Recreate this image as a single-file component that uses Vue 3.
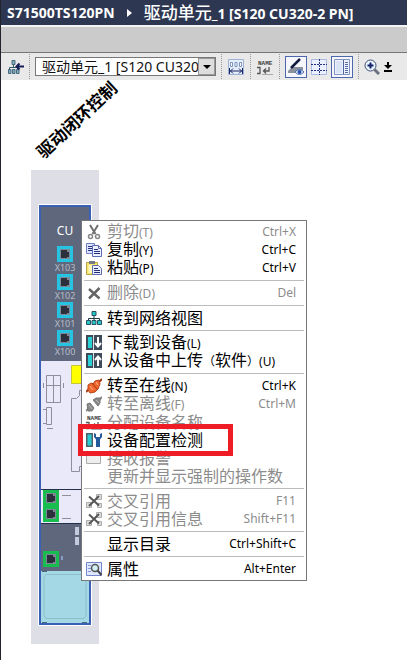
<script setup>
import { ref } from 'vue'

const device = ref('cu320')
const ports = ['X103', 'X102', 'X101', 'X100']

const groups = [
  [
    { icon: 'cut', text: '剪切', key: '(T)', shortcut: 'Ctrl+X', off: true },
    { icon: 'copy', text: '复制', key: '(Y)', shortcut: 'Ctrl+C' },
    { icon: 'paste', text: '粘贴', key: '(P)', shortcut: 'Ctrl+V' }
  ],
  [{ icon: 'delete', text: '删除', key: '(D)', shortcut: 'Del', off: true }],
  [{ icon: 'network', text: '转到网络视图' }],
  [
    { icon: 'download', text: '下载到设备', key: '(L)' },
    { icon: 'upload', text: '从设备中上传', note: '软件', key: '(U)' }
  ],
  [
    { icon: 'online', text: '转至在线', key: '(N)', shortcut: 'Ctrl+K' },
    { icon: 'offline', text: '转至离线', key: '(F)', shortcut: 'Ctrl+M', off: true },
    { icon: 'name', text: '分配设备名称', off: true },
    { icon: 'detect', text: '设备配置检测', marked: true },
    { icon: 'box', text: '接收报警', off: true },
    { text: '更新并显示强制的操作数', off: true }
  ],
  [
    { icon: 'cross', text: '交叉引用', shortcut: 'F11', off: true },
    { icon: 'cross', text: '交叉引用信息', shortcut: 'Shift+F11', off: true }
  ],
  [{ text: '显示目录', shortcut: 'Ctrl+Shift+C' }],
  [{ icon: 'props', text: '属性', shortcut: 'Alt+Enter' }]
]
</script>

<template>
  <div class="page">
    <svg class="defs" aria-hidden="true">
      <symbol id="i-cut" viewBox="0 0 16 16">
        <path d="M4 1l5.500 9M12 1L6.500 10" fill="none" stroke="#6f6f6f" stroke-width="2" />
        <circle cx="4.500" cy="12.500" r="2" fill="none" stroke="#858585" stroke-width="1.500" />
        <circle cx="11.500" cy="12.500" r="2" fill="none" stroke="#858585" stroke-width="1.500" />
      </symbol>
      <symbol id="i-copy" viewBox="0 0 16 16">
        <path d="M.5 1.500h8v10h-8z" fill="#dfe4ff" stroke="#6f7fc4" />
        <path d="M2 4.500h4M2 6.500h4M2 8.500h4" stroke="#26357e" />
        <path d="M6.500 3.500h6l3 3v8h-9z" fill="#eef1ff" stroke="#5c6bb5" />
        <path d="M12.500 3.500v3h3" fill="none" stroke="#5c6bb5" />
        <path d="M8 7.500h4M8 9.500h6M8 11.500h6" stroke="#202d78" />
      </symbol>
      <symbol id="i-paste" viewBox="0 0 16 16">
        <path d="M.5 2.500h11v12H.5z" fill="#f4e36c" stroke="#b7a548" />
        <path d="M3 1h6v3H3z" fill="#777a84" />
        <path d="M2.500 5h7v8h-7z" fill="#fff8be" />
        <path d="M6.500 5.500h6l3 3v6h-9z" fill="#edf0ff" stroke="#5c6bb5" />
        <path d="M8 8.500h4M8 10.500h6M8 12.500h6" stroke="#202d78" />
      </symbol>
      <symbol id="i-delete" viewBox="0 0 16 16">
        <path d="M3 4l10.500 9.500M13.500 3L3 13.500" fill="none" stroke="#666" stroke-width="2.500" />
      </symbol>
      <symbol id="i-network" viewBox="0 0 16 16">
        <path d="M8 6v4M2.500 11V8.500h11V11" fill="none" stroke="#1d3743" />
        <path d="M6 1.500h4v4H6zM.5 10.500h4v4h-4zM6 10.500h4v4H6zM11.500 10.500h4v4h-4z" fill="#25c8c6" stroke="#29515f" />
      </symbol>
      <symbol id="i-download" viewBox="0 0 16 16">
        <path d="M0 0h16v15H0z" fill="#3f4a5b" />
        <path d="M2 2h4v11H2z" fill="#29d0d4" />
        <path d="M7 0h1v15H7z" fill="#dce4e8" />
        <path d="M12 2v8M9 8l3 3.500L15 8" fill="none" stroke="#fff" stroke-width="2" />
      </symbol>
      <symbol id="i-upload" viewBox="0 0 16 16">
        <path d="M0 0h16v15H0z" fill="#3f4a5b" />
        <path d="M2 2h4v11H2z" fill="#29d0d4" />
        <path d="M7 0h1v15H7z" fill="#dce4e8" />
        <path d="M12 13V5M9 7l3-3.500L15 7" fill="none" stroke="#fff" stroke-width="2" />
      </symbol>
      <symbol id="i-online" viewBox="0 0 16 16">
        <path d="M0 14l3-3M13 4l3-3" stroke="#a33b16" stroke-width="2" />
        <path d="M2 7l3-2 2 1 2-3 4-1 1 4-2 5-3 3-5 1-2-3z" fill="#f1662c" stroke="#b54419" />
        <path d="M4 8l3 4M10 4l2 3" stroke="#ffb58c" />
        <path d="M6 5l5 6" stroke="#9d3415" />
      </symbol>
      <symbol id="i-offline" viewBox="0 0 16 16">
        <path d="M0 15l3-3M13 4l3-3" stroke="#888" stroke-width="2" />
        <path d="M1 8l3-1 4 5-2 3H2zM7 4l3-2h4v5l-2 3z" fill="#858885" stroke="#777" />
        <path d="M3 9l3 4M10 4l3 3" stroke="#b8bab8" />
      </symbol>
      <symbol id="i-name" viewBox="0 0 16 16">
        <path d="M0 8.500h3v6H0M12 8v4H7M9 9.500L6.500 12 9 14.500" fill="none" stroke="#555" stroke-width="1.300" />
        <path d="M5 15.500h11" stroke="#aaa" />
      </symbol>
      <symbol id="i-detect" viewBox="0 0 16 16">
        <path d="M0 1h7v14H0z" fill="#50636d" />
        <path d="M1.500 2.500h4v11h-4z" fill="#29cbd0" />
        <path d="M8 1v4l2 2.500V15h4V7.500L16 5V1l-2 1v3h-4V2z" fill="#245a9c" />
      </symbol>
      <symbol id="i-box" viewBox="0 0 16 16">
        <path d="M.5 2.500h14v11H.5z" fill="#eee" stroke="#aaa" />
      </symbol>
      <symbol id="i-cross" viewBox="0 0 16 16">
        <path d="M10.500 1.500h5v5h-5zM.5 9.500h5v5h-5zM11.500 10.500h4v4h-4z" fill="#ddd" stroke="#aaa" />
        <path d="M3 3.500l10 9M13 3L3 13" stroke="#565656" stroke-width="2" />
      </symbol>
      <symbol id="i-props" viewBox="0 0 16 16">
        <path d="M.5 1.500h15v13H.5z" fill="#dfe7ff" stroke="#7484ce" />
        <path d="M2 4.500h3M2 7.500h3M2 10.500h3" stroke="#8896dc" />
        <circle cx="9" cy="7" r="3.500" fill="#d3f0f7" stroke="#555" stroke-width="1.500" />
        <path d="M11.500 9.500l4 4.500" stroke="#444" stroke-width="2" />
      </symbol>
      <symbol id="i-port" viewBox="0 0 16 16">
        <path d="M1.500 1.500h13v13h-13z" fill="#7e8794" stroke="currentColor" stroke-width="3" />
        <path d="M4 4h6v2h2v5h-2v1H4z" fill="#2c303c" />
      </symbol>
      <symbol id="i-tree" viewBox="0 0 16 16">
        <path d="M5.500 5v4M1.500 10V8.500h8V10" fill="none" stroke="#36586b" />
        <path d="M4 1.500h3v4H4zM.5 10.500H3v4H.5zM4.500 10.500H7v4H4.500zM8.500 10.500H11v4H8.500z" fill="#7facc0" stroke="#48687b" />
        <path d="M16 7.500H9M11.500 4.500l-3 3 3 3" fill="none" stroke="#141d55" stroke-width="2" />
      </symbol>
      <symbol id="i-fit" viewBox="0 0 16 16">
        <path d="M.5.5h15v15H.5z" fill="#e4edfa" stroke="#9eb2d5" />
        <path d="M2.500 3.500h2v4h-2zM7 3.500h2v4H7zM11.500 3.500h2v4h-2z" fill="#fff" stroke="#7e93ba" />
        <path d="M1.500 9v6M14.500 9v6" stroke="#182469" />
        <path d="M2 12h12M5 9.500L2.500 12 5 14.500M11 9.500l2.500 2.500-2.500 2.500" fill="none" stroke="#182469" />
      </symbol>
      <symbol id="i-grid" viewBox="0 0 16 16">
        <path d="M.5.5h15v15H.5z" fill="#eaf0ff" stroke="#aab8e2" />
        <path d="M0 5.500h16M0 11.500h16M8.500 0v16" fill="none" stroke="#25317c" stroke-dasharray="2 1" />
      </symbol>
      <symbol id="i-pen" viewBox="0 0 18 18">
        <path d="M1 13l4-4h11v3l-4 3H1z" fill="#8c929b" />
        <path d="M4 10L13 1" stroke="#111b3d" stroke-width="2.500" />
        <path d="M8 14q4.500-5 9 0-4.500 5-9 0z" fill="#eef4ff" stroke="#4d6baf" />
        <circle cx="12.500" cy="14" r="2" fill="#244caa" />
      </symbol>
      <symbol id="i-list" viewBox="0 0 18 18">
        <path d="M1.500 1.500h15v15h-15z" fill="#eef2ff" stroke="#8193c3" />
        <path d="M10.500 2v14" stroke="#4f639e" />
        <path d="M12 4.500h3M12 6.500h3M12 8.500h3M12 10.500h3M12 12.500h3M12 14.500h3" stroke="#53699f" />
        <path d="M3 3h6v12H3z" fill="#dbe3f6" />
      </symbol>
      <symbol id="i-zoom" viewBox="0 0 16 16">
        <circle cx="6.500" cy="6.500" r="5.500" fill="#e7f6ff" stroke="#414b70" />
        <path d="M3.500 6.500h6M6.500 3.500v6" stroke="#15206b" stroke-width="2" />
        <path d="M10.500 10.500l4.500 4.500" stroke="#697080" stroke-width="3" />
      </symbol>
    </svg>

    <header class="title">
      <span class="latin">S71500TS120PN</span>
      <svg class="crumb" viewBox="0 0 5 8" aria-hidden="true"><path d="M0 0l5 4-5 4z" fill="#fff" /></svg>
      <span>驱动单元<span class="latin">_1 [S120 CU320-2 PN]</span></span>
    </header>
    <div class="band"></div>

    <div class="toolbar" role="toolbar">
      <button class="tool slim" aria-label="网络"><svg><use href="#i-tree" /></svg></button>
      <i class="sep"></i>
      <div class="picker">
        <select v-model="device" aria-label="设备">
          <option value="cu320">驱动单元_1 [S120 CU320-2 PN]</option>
        </select>
        <span class="drop"><svg viewBox="0 0 8 4"><path d="M0 0h8L4 4z" /></svg></span>
      </div>
      <i class="sep"></i>
      <button class="tool" aria-label="宽度"><svg><use href="#i-fit" /></svg></button>
      <i class="sep"></i>
      <button class="tool" aria-label="名称"><svg><use href="#i-name" /><text x="1" y="6" class="tiny">NAME</text></svg></button>
      <i class="sep"></i>
      <div class="set">
        <button class="tool on" aria-label="标签"><svg><use href="#i-pen" /></svg></button>
        <button class="tool slim" aria-label="网格"><svg><use href="#i-grid" /></svg></button>
        <button class="tool on" aria-label="列表"><svg><use href="#i-list" /></svg></button>
      </div>
      <i class="sep"></i>
      <div class="set">
        <button class="tool slim" aria-label="缩放"><svg><use href="#i-zoom" /></svg></button>
        <svg class="more" viewBox="0 0 8 10" aria-hidden="true"><path d="M3 0h2v3h3L4 7 0 3h3zM0 8h8v2H0z" /></svg>
      </div>
    </div>

    <main class="canvas">
      <div class="caption">驱动闭环控制</div>
      <div class="rack">
        <div class="device">
          <div class="head">
            <div class="cu">CU</div>
            <div v-for="p in ports" :key="p" class="port">
              <svg><use href="#i-port" /></svg>
              <span>{{ p }}</span>
            </div>
          </div>
          <svg class="body" viewBox="0 0 48 262" aria-hidden="true">
            <path d="M0 0h48v162H0z" fill="#e9e9fa" />
            <path d="M30.500 4.500h18v18h-18z" fill="#ff0" stroke="#c6c63a" />
            <g fill="none" stroke="#8e8e9c">
              <path d="M5.500 14.500h14v27h-14zM12.500 14.500v27M5 24.500h14M2.500 22v5M22.500 22v5" />
              <path d="M5.500 46.500h5v17h-5zM2 48.500h3M2 62.500h3M6 67.500h6" />
              <path d="M48 29.500h-9.500v5l-3 3h-5v73h8v-5H48" />
            </g>
            <path d="M0 128.500h48M0 162.500h48" stroke="#252f4b" />
            <path d="M21 134.500h9M21 157.500h9" stroke="#8f8f9c" />
            <path d="M0 163h48v47H0z" fill="#5e677b" />
            <path d="M34 166h4v8h-4zM34 176h4v8h-4z" fill="#c3cadb" />
            <path d="M20 195h2v4h-2z" fill="#8b9cc7" />
            <g color="#18bd50">
              <use href="#i-port" x="2" y="129" width="16" height="16" />
              <use href="#i-port" x="2" y="145" width="16" height="16" />
              <use href="#i-port" x="2" y="190" width="16" height="16" />
            </g>
            <path d="M0 210h48v52H0z" fill="#a5d8e5" />
            <path d="M5 213.500h38l2 3v38l-2 3H5l-2-3v-38z" fill="none" stroke="#8abfca" />
            <path d="M1 210.500h5M1 261.500h5M41 261.500h5" stroke="#486b80" />
          </svg>
        </div>
      </div>
    </main>

    <div class="menu" role="menu">
      <div v-for="(g, i) in groups" :key="i" class="group">
        <button v-for="m in g" :key="m.text" class="item" :class="{ off: m.off, marked: m.marked }" :disabled="m.off" role="menuitem">
          <svg class="ico"><use v-if="m.icon" :href="'#i-' + m.icon" /><text v-if="m.icon === 'name'" x="1" y="6" class="tiny">NAME</text></svg>
          <span class="label">{{ m.text }}<template v-if="m.note"><small>（</small>{{ m.note }}<small>）</small></template><small v-if="m.key">{{ m.key }}</small></span>
          <span class="short">{{ m.shortcut }}</span>
        </button>
      </div>
    </div>
  </div>
</template>

<style>
body {
  background: #fff;
}
</style>

<style scoped>
.page {
  position: relative;
  box-sizing: border-box;
  min-height: 100vh;
  overflow: hidden;
  border-left: 1px solid #23242c;
  font-family: "Noto Sans", "Noto Sans CJK SC", sans-serif;
  color: #000;
}
.defs {
  position: absolute;
  width: 0;
  height: 0;
}
.tiny {
  fill: #444;
  font: bold 6px "Liberation Mono", monospace;
}
svg {
  display: block;
}
button {
  font: inherit;
  color: inherit;
  padding: 0;
  border: 0;
  background: none;
}
.title {
  display: flex;
  align-items: center;
  height: 25px;
  padding: 0 6px;
  background: #2e3751;
  border-bottom: 2px solid #f4f4f6;
  color: #fff;
  font-size: 17px;
  font-weight: 500;
  line-height: 25px;
  white-space: nowrap;
}
.title .latin {
  font-size: 14px;
  font-weight: 700;
}
.crumb {
  width: 5px;
  height: 8px;
  margin: 0 12px;
}
.band {
  height: 25px;
  background: #cbcbcb;
  border-bottom: 1px solid #777;
}
.toolbar {
  display: flex;
  align-items: center;
  gap: 5px;
  height: 27px;
  padding-left: 7px;
  background: #e9e9e9;
}
.tool {
  display: flex;
  align-items: center;
  justify-content: center;
  flex: none;
  width: 18px;
  height: 22px;
}
.tool svg {
  width: 16px;
  height: 16px;
}
.slim {
  width: 16px;
}
.on {
  box-sizing: border-box;
  width: 22px;
  border: 1px solid #4e66ac;
  background: #f5f7fd;
}
.on svg {
  width: 18px;
  height: 18px;
}
.sep {
  height: 25px;
  border-left: 1px dotted #999;
}
.set {
  display: flex;
  align-items: center;
  gap: 4px;
}
.more {
  width: 8px;
  height: 10px;
}
.picker {
  display: flex;
  box-sizing: border-box;
  width: 181px;
  height: 19px;
  border: 1px solid #777;
  background: #fff;
}
.picker select {
  flex: 1;
  min-width: 0;
  padding: 0 0 0 6px;
  border: 0;
  appearance: none;
  background: none;
  color: #111;
  font: 14px/17px "Noto Sans", "Noto Sans CJK SC", sans-serif;
}
.drop {
  display: flex;
  align-items: center;
  justify-content: center;
  width: 15px;
  border: 1px solid #999;
  background: #ddd;
}
.drop svg {
  width: 8px;
  height: 4px;
}
.canvas {
  position: relative;
  padding: 90px 30px 15px;
}
.caption {
  position: absolute;
  left: 25px;
  top: 28px;
  font-size: 17px;
  font-weight: 700;
  line-height: 24px;
  white-space: nowrap;
  transform: rotate(-43deg);
}
.rack {
  width: 53px;
  padding: 34px 8px 18px 7px;
  background: #dedee7;
}
.device {
  padding: 2px;
  margin-right: -1px;
  border: 1px solid #fff;
  background: #3c60b5;
}
.head {
  display: flex;
  flex-direction: column;
  align-items: center;
  padding: 16px 0 3px;
  background: #5e677b;
}
.cu {
  margin-bottom: 7px;
  color: #fff;
  font-size: 12px;
  line-height: 16px;
}
.port {
  display: flex;
  flex-direction: column;
  align-items: center;
  color: #25c4e2;
}
.port svg {
  width: 16px;
  height: 16px;
}
.port span {
  color: #b7bdca;
  font-size: 9px;
  line-height: 12px;
}
.body {
  width: 100%;
  height: 262px;
}
.menu {
  position: absolute;
  left: 80px;
  top: 220px;
  box-sizing: border-box;
  width: 226px;
  padding: 2px;
  border: 1px solid #777;
  background: #fff;
}
.group + .group {
  padding-top: 7px;
  background: linear-gradient(#bbb, #bbb) 0 3px / 100% 1px no-repeat;
}
.item {
  position: relative;
  display: flex;
  align-items: center;
  width: 100%;
  height: 18px;
  padding: 0 8px 0 2px;
  font-size: 16px;
  line-height: 18px;
  text-align: left;
  white-space: nowrap;
}
.ico {
  flex: none;
  width: 16px;
  height: 16px;
}
.label {
  flex: 1;
  padding-left: 5px;
}
small,
.short {
  font-size: 12px;
}
.off {
  color: #8c8c8c;
}
.marked {
  z-index: 1;
}
.marked::after {
  content: "";
  position: absolute;
  left: -6px;
  top: -7px;
  width: 145px;
  height: 22px;
  border: 5px solid #ee1c24;
}
</style>
